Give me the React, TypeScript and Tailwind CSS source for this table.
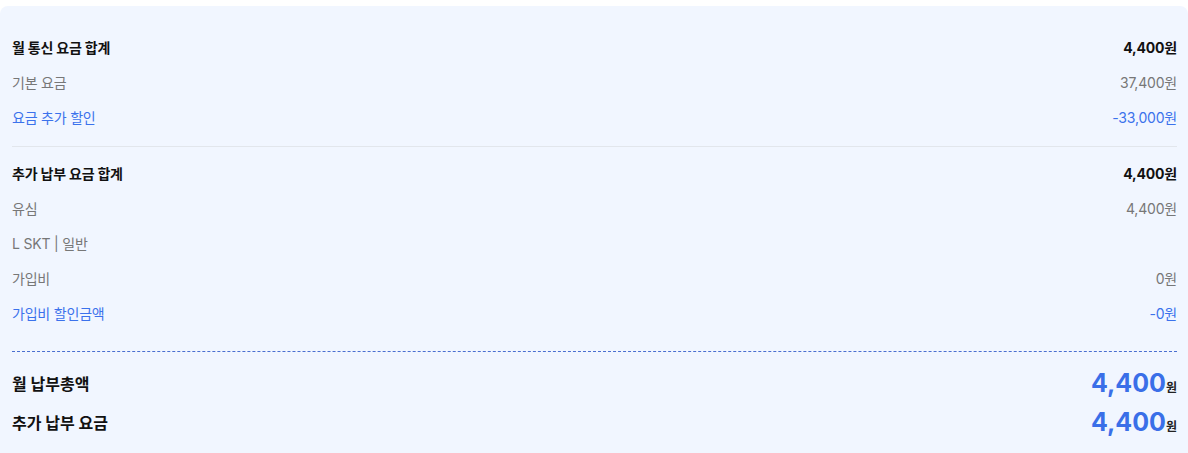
import React from "react";

type Row = { label: string; value?: string; tone: "head" | "gray" | "blue" };

const monthly: Row[] = [
  { label: "월 통신 요금 합계", value: "4,400원", tone: "head" },
  { label: "기본 요금", value: "37,400원", tone: "gray" },
  { label: "요금 추가 할인", value: "-33,000원", tone: "blue" },
];

const extra: Row[] = [
  { label: "추가 납부 요금 합계", value: "4,400원", tone: "head" },
  { label: "유심", value: "4,400원", tone: "gray" },
  { label: "L SKT | 일반", tone: "gray" },
  { label: "가입비", value: "0원", tone: "gray" },
  { label: "가입비 할인금액", value: "-0원", tone: "blue" },
];

const toneClass = {
  head: "font-bold text-[#111111]",
  gray: "text-[#777777]",
  blue: "text-[#3b72ec]",
};

const FeeRow = ({ row }: { row: Row }) => (
  <div className={`flex h-[35px] items-center justify-between text-[14px] tracking-[-0.2px] ${toneClass[row.tone]}`}>
    <span>{row.label}</span>
    {row.value && <span>{row.value}</span>}
  </div>
);

const Total = ({ label, amount }: { label: string; amount: string }) => (
  <div className="flex h-[39px] items-center justify-between">
    <span className="text-[16px] font-bold text-[#111111]">{label}</span>
    <span className="flex items-baseline">
      <span className="text-[25px] font-bold leading-none text-[#3a6fe8]">{amount}</span>
      <span className="text-[12px] font-bold text-[#222222]">원</span>
    </span>
  </div>
);

export default function App() {
  return (
    <div
      className="min-h-[453px] bg-white pt-[6px]"
      style={{ fontFamily: 'Inter, "Noto Sans CJK KR", sans-serif' }}
    >
      <div className="rounded-t-lg bg-[#f1f6ff] pl-3 pr-[11px] pb-[12px]">
        <div className="border-b border-[#e2e6ec] pt-[24px] pb-[11px]">
          {monthly.map((r) => (
            <FeeRow key={r.label} row={r} />
          ))}
        </div>
        <div className="border-b border-dashed border-[#4a6fd0] pt-[9px] pb-[20px]">
          {extra.map((r) => (
            <FeeRow key={r.label} row={r} />
          ))}
        </div>
        <div className="pt-[12px]">
          <Total label="월 납부총액" amount="4,400" />
          <Total label="추가 납부 요금" amount="4,400" />
        </div>
      </div>
    </div>
  );
}
